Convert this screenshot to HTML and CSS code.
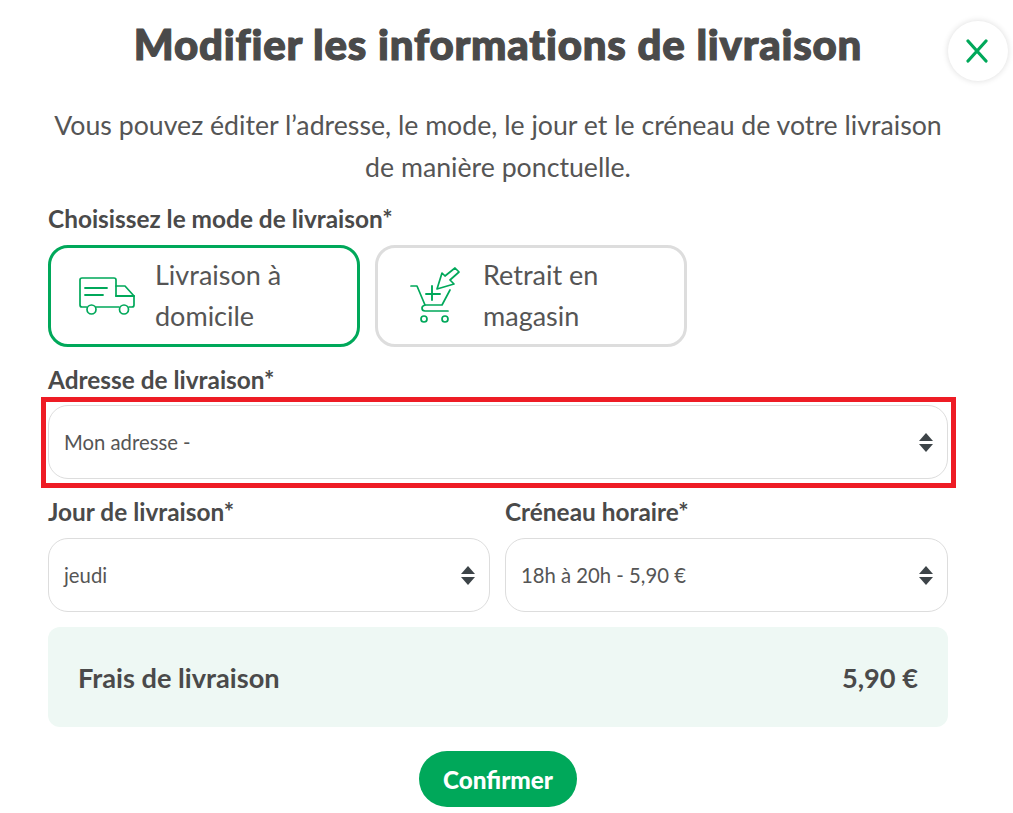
FILE: index.html
```html
<!DOCTYPE html>
<html lang="fr">
<head>
<meta charset="utf-8">
<title>Modifier les informations de livraison</title>
<link rel="stylesheet" href="styles.css">
</head>
<body>
<main class="modal">
  <button class="close" aria-label="Fermer">
    <svg width="22" height="24" viewBox="0 0 22 24"><path d="M2 2 L20 22 M20 2 L2 22" fill="none" stroke="#00a85a" stroke-width="3.2" stroke-linecap="round"/></svg>
  </button>
  <h1 class="title">Modifier les informations de livraison</h1>
  <p class="intro">Vous pouvez éditer l’adresse, le mode, le jour et le créneau de votre livraison de manière ponctuelle.</p>

  <div class="label">Choisissez le mode de livraison*</div>
  <div class="modes">
    <div class="mode mode-active">
      <svg class="mode-icon" width="56" height="39" viewBox="0 0 56 39" fill="none" stroke="#00a85a" stroke-width="1.7" stroke-linecap="round" stroke-linejoin="round">
        <path d="M7.5 30 H3 Q1 30 1 28 V3 Q1 1 3 1 H35 Q37 1 37 3 V19"/>
        <path d="M37 9 H46 L55 19 V28 Q55 30 53 30 H50"/>
        <path d="M37 19 H55" stroke-width="2"/>
        <path d="M17 30 H40"/>
        <path d="M6 11 H28 M6 18 H24" stroke-width="1.8"/>
        <circle cx="12.5" cy="32.5" r="4.5"/>
        <circle cx="45" cy="32.5" r="4.5"/>
      </svg>
      <span class="mode-text">Livraison à domicile</span>
    </div>
    <div class="mode">
      <svg class="mode-icon mode-icon-cart" width="50" height="56" viewBox="0 0 50 56" fill="none" stroke="#00a85a" stroke-width="1.7" stroke-linecap="round" stroke-linejoin="round">
        <path d="M1 19 H7 L15 38"/>
        <path d="M40 23 L32 38 H15 Q12 39 12 41 Q12 44 15 44 H38"/>
        <path d="M22 19 V33 M16 27 H30" stroke-width="1.9"/>
        <circle cx="14" cy="52" r="3"/>
        <circle cx="35" cy="52" r="3"/>
        <path d="M27 22 L32 6 L35 9 L45 1 L49 5 L40 13 L44 17 Z"/>
      </svg>
      <span class="mode-text">Retrait en magasin</span>
    </div>
  </div>

  <div class="label label-address">Adresse de livraison*</div>
  <div class="field-wrap">
    <div class="select"><span>Mon adresse -</span>
      <svg class="updown" width="16" height="19" viewBox="0 0 16 19"><path d="M8 0 L15 8 H1 Z M1 11 H15 L8 19 Z" fill="#3d4448"/></svg>
    </div>
    <div class="highlight"></div>
  </div>

  <div class="columns">
    <div class="col">
      <div class="label">Jour de livraison*</div>
      <div class="select"><span>jeudi</span>
        <svg class="updown" width="16" height="19" viewBox="0 0 16 19"><path d="M8 0 L15 8 H1 Z M1 11 H15 L8 19 Z" fill="#3d4448"/></svg>
      </div>
    </div>
    <div class="col">
      <div class="label">Créneau horaire*</div>
      <div class="select"><span>18h à 20h - 5,90 €</span>
        <svg class="updown" width="16" height="19" viewBox="0 0 16 19"><path d="M8 0 L15 8 H1 Z M1 11 H15 L8 19 Z" fill="#3d4448"/></svg>
      </div>
    </div>
  </div>

  <div class="fees"><span>Frais de livraison</span><span>5,90 €</span></div>
  <div class="actions"><button class="confirm">Confirmer</button></div>
</main>
</body>
</html>
```

FILE: styles.css
```css
* { box-sizing: border-box; }
html, body { margin: 0; padding: 0; background: #fff; overflow: hidden; }
body { font-family: "Lato", "Liberation Sans", sans-serif; color: #4a4a4a; }
.modal { position: relative; width: 900px; margin-left: 48px; }
.close {
  position: absolute; top: 21px; left: 900px; width: 60px; height: 60px;
  border: 0; border-radius: 50%; background: #fff; padding: 0 2px 0 0;
  box-shadow: 0 0 6px rgba(0,0,0,.14);
  display: flex; align-items: center; justify-content: center;
}
.title {
  margin: 0; padding-top: 19px; height: 80px;
  font-size: 42px; line-height: 50px; font-weight: 900; text-align: center; color: #4a4a4a;
  letter-spacing: .8px; -webkit-text-stroke: 1.2px #4a4a4a;
}
.intro {
  margin: 24px 0 0; padding: 0 5px; font-size: 26.7px; line-height: 42px; text-align: center; color: #555;
}
.label { font-size: 24.4px; line-height: 30px; font-weight: 700; color: #4a4a4a; }
.intro + .label { margin-top: 16px; }
.modes { display: flex; gap: 15px; margin-top: 11px; }
.mode {
  width: 312px; height: 102px; border: 3px solid #ddd; border-radius: 20px;
  display: flex; align-items: center; background: #fff;
}
.mode-active { border-color: #00a85a; }
.mode-icon { margin-left: 28px; margin-right: 20px; flex: none; }
.mode-icon-cart { margin-left: 32px; margin-right: 23px; margin-top: -2px; }
.mode-text { font-size: 27px; line-height: 41px; color: #555; width: 170px; margin-top: -2px; }
.label-address { margin-top: 18px; }
.field-wrap { position: relative; margin-top: 10px; }
.select {
  height: 74px; border: 1px solid #ddd; border-radius: 20px; background: #fff;
  display: flex; align-items: center; justify-content: space-between;
  padding: 0 13px 0 15px; font-size: 20.3px; color: #555;
}
.highlight {
  position: absolute; left: -7px; top: -8px; width: 915px; height: 91px;
  border: 5px solid #ee1c25; pointer-events: none;
}
.columns { display: grid; grid-template-columns: 442px 443px; gap: 15px; margin-top: 18px; }
.col { min-width: 0; }
.col .select { margin-top: 11px; height: 74px; }
.fees {
  margin-top: 15px; height: 100px; border-radius: 12px; background: #eef8f4;
  display: flex; align-items: center; justify-content: space-between;
  padding: 0 30px; font-size: 27.2px; font-weight: 700; color: #4a4a4a;
}
.actions { display: flex; justify-content: center; margin-top: 24px; }
.confirm {
  width: 158px; height: 56px; border: 0; border-radius: 28px; background: #00a85a;
  color: #fff; font-family: inherit; font-size: 24.3px; font-weight: 900; padding: 0;
}
```
